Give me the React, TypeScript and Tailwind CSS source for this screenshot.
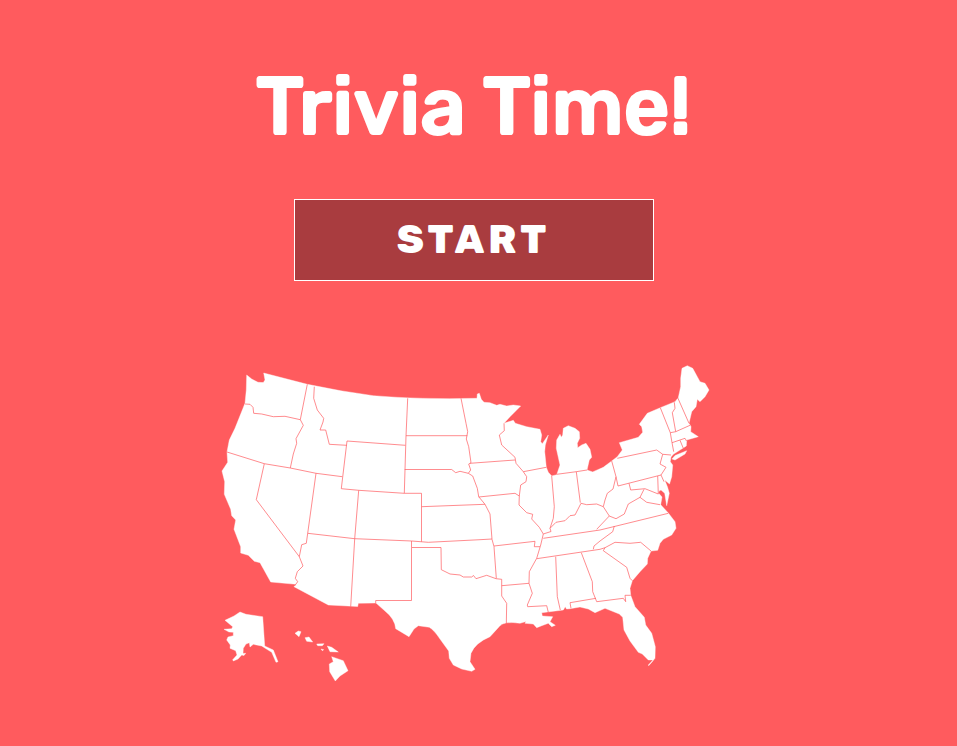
const MAINLAND =
  'M246.7 375L251.7 379L258 382.3L263.3 382.6L265 380L263.7 373L307.3 384.3Q340 391.3 373.3 395.7Q420 399.6 477 398.3L477.3 394L479.3 393.3L481.3 399.3L484 402.3L490 402.7L496.7 405.3L500 404.3L506.7 406L513.3 405L520.7 406L510 416.7L504 423.3L513.3 420.3L515.3 423.3L526.7 426.7L540 429.3L541.7 435L540.7 441.7L542.3 443.7L548.3 435L545.3 445L544.7 451.7L546.3 467.3L548.3 472.3L551.7 476L556.7 474.7L560 465L556.3 448.3L556.7 440L560 434.3L561.3 437.3L562.7 435L563.3 428.3L568.3 425.7L575 428.3L579.3 431.7L579.7 438.3L577.3 443.3L577.7 447.7L581.7 445L586 443.3L590 449.3L591.7 457.3L589.3 460L587 470L592.7 471.9L603.3 467.3L611.7 461L617.3 456.7L622.3 450L619.3 442.7L638.3 437.3L642.7 432.3L641.7 426.7L639.3 424.3L647.3 413.3L660.3 407.7L675 401.7L678.3 397.7L680.7 386.7L680.7 378.3L682 368.3L687.3 365.7L692.7 368.3L700 381.7L705 383.3L709 390L705 396.7L700 401.7L697.3 399.3L696 406.7L691.7 411.7L689 423.3L691 426.7L690.7 431.7L698.3 436.7L686.7 440L686.3 446L673.3 454.3L671 457L670.3 461.7L672.7 465L671.7 476.7L669.5 484L664.7 480L667.5 487L669.3 493.3L666.7 505.7L664.7 493.3L661 490L659 491L658.5 493L662 497L660.7 504.7L668.3 513L675 521.7L676 528.3L671.7 535L663.3 539.3L660 543.3L657.7 550.3L651 551L647.7 558.3L647.3 564L640 571.7L632.3 580.7L630 588.3L630.7 595.3L635 606.7L644.3 617.3L645.7 625L651.7 633.3L655.3 646.7L655 658.3L652 662L648.7 665.7L648.3 665L653 660L648.3 660L642.3 654L638.3 652.3L630 641L624 630L622.7 617.3L619.3 614L605 608.3L595 612.7L588.3 609L580 607L570 608.7L566.5 609L565.3 606.7L563.3 610L541.7 612.7L542.3 616L552.7 616.7L550 621.7L555.3 625.3L551.7 626.7L548.3 623.3L541.7 625.7L536.7 627.7L533.3 624L525 623.3L526 621.5L520 623.3Q505 621 500 625.7L490 636.7Q475 643 471 653.3L470 661.7L475 669.3L471.7 671.3L461.7 669L453.3 665L449.3 658.3L448.7 651L440 639Q434 630 429.3 627.3L418.3 625.7L414 629L409 636.7L395.7 628.7Q395 619 385 611L376 603L358.3 603.3L357.7 606.5L328.3 605L294 586.7L296 584.3L270.7 582L260 562.7L254.3 561.3L248.3 555.3L240.7 553L240.7 546.7L234 529.3L235.7 520L231.7 515.7L230.7 509.3L224.3 494.3L224.7 481.7L222 471L227.7 462.3L227 452L229.3 440L235 428.3L245 403.3L246.3 390Z';

const LONG_ISLAND = 'M672 459L675 455.5L686.7 450.7L685 454L675 460Z';

const BORDERS = [
  'M245 404L250 404.3L253 407.3L253.7 413.3L261.7 414L273.3 416.7L285 416.3L300.3 419.7',
  'M307.3 384.3L300.3 419.7L303.3 425.3L296 438.7L296.7 443.3L293.3 454L290.3 468',
  'M314.3 386.7L313.7 398.3L317.3 410L323.7 418.3L323 422L320 430L325.7 430L329.3 444.3L346.7 445.3',
  'M227 452L264.3 463.7L290.3 468L316 473.3L342.3 476.7',
  'M405.3 445.3L347 441L341.3 488.7L358.7 490.3L404.3 493.3H421.5V541.7',
  'M407.7 398.3L406 436L404.3 493.3',
  'M406 435.7H467.3',
  'M461 398.3L466 423.3L467.7 431.7L466.3 439L468.7 446.7L471 462.7L468.7 464L470.7 470L468.3 473.3',
  'M404.7 469.5H451.7L455.7 472.7L460 471.3L468.3 473.3L472.7 476L477.3 488.3L478.7 496.7L485 504.3L490 514L492 539.3L494 546.7L496.3 578.3',
  'M470 463.3L515 460',
  'M478.7 497L515 493.3L519.3 496',
  'M504 423.3L504.3 430.7L499.3 435L501.7 445L515 457.3L516 463.3L523.3 471.7L526.7 476.7L526 481.7L520.7 485L519.3 496L519 505L526.7 512.7L532.7 514.3L531.7 519L539.3 527.3L543.3 534L540.7 545L536.7 558.3L529.3 571.7L529 583.3L532.3 593.3L527.3 605L527.7 606.7L546.7 605.7L548.3 612.3',
  'M523.3 471.7L546.3 467.3',
  'M551.7 476L554.3 506.7L553.3 518.3L550 528.3L551 531.5L543.3 534',
  'M556.7 474.3L576.3 471.7L587 470',
  'M576.3 471.7L580.3 502.7',
  'M550 528.3L556 522.3L565 520.7L570 515.7L575 515L581 503.3L586.7 504.7L596.7 504L603.3 506.7L605 500L607.3 493.3L613 489L616 476.7L611.7 461',
  'M616 476.7L618 486L661 475',
  'M603.3 506.7L609.3 516L596.7 529.3',
  'M609.3 516L616 518.7L624.3 514L628.3 504L640 497.3L644 489.3',
  'M640 497.3L646.7 502.3L660 504.7',
  'M629 483.3L630.7 490L645 488.7L658.3 494L657.7 476',
  'M617.3 458.3L656.7 450L662.7 454.3L671 455',
  'M662.7 454.3L660 464L666 467.3L661 475L664 481.7',
  'M660.3 407.7L670.3 432.7L672 442.7L673.7 451.7',
  'M674.3 402.3L675 408.3L672.3 412.7L675.7 431.7',
  'M677.7 397.7L689 423.3',
  'M670.3 432.7L675.7 431.7L690 425.3',
  'M672 442.7L685 438.3L686.5 441',
  'M680 440.3L683.3 448.3',
  'M543.3 538.3L600 530L668.3 513.3',
  'M536.7 558.7L600 549.3L605 547.7L615 542.3L630 543.3L640.7 542.3L651 551',
  'M614.3 526L612.7 531.7L600 541L594 546L593.3 549.3',
  'M605 547.7L603.3 550.7L626.7 567.3L630 578.3L632.3 580.7',
  'M581.3 552.7L592.3 581.7L592.7 591.7L596.7 601.7L623.3 598.3L625.7 601.7L625 595.3L630.7 595.3',
  'M596 598.3L570 602.7L571 608.3',
  'M555.7 556.7L557.3 596.7L560.3 610',
  'M494 546L535 541.3L534.3 546.7H540',
  'M501.7 585.7L529 583.3',
  'M501.7 579.3V596L506.7 603.3L506.3 624.3',
  'M421.7 506.7L485 504.3',
  'M307.7 533.3L354.7 538.7L411.7 541L428.3 542.3L480 539.7L492 539',
  'M358.7 490.3L354.7 538.7L350.7 606.7',
  'M411.5 541V600.5H375.7V603',
  'M412 547.5H441L441.3 569.7L450 574L460 575L463.3 577L471.7 577L473.5 575.5L476 578.7L486.7 575.3L496 578.7L501.7 579.3',
  'M316 473.3L307.7 533.3L306.3 543.3L301.7 544.7L299.3 556.7L303 566L297.3 571.7L295.3 578.3L297.7 581.7L294.5 586',
  'M264.3 463.7L256.3 499.7L299.3 556.7',
].join('');

const ALASKA =
  'M240 612L246 614.3L262.7 616.7L264.7 646L273.3 650L278 661.7L276 662.3L271.7 652.3L261.7 646L253.3 644.3L250 647L249.3 642.7L246 644L243.3 648.3L243 653.5L245.7 653.3L244 655.5L241.7 655L238 659L233.3 661L232.7 659.7L237 655L235.7 650.7L230 648.3L230.3 645L226.7 640L228 637L233.3 635.7L233.3 632.3L229 632L224 629.3L231.7 628.7L232.7 626.7L225 620.3L234 616Z';

const HAWAII =
  'M295 633.3L298.3 631L301 631.7L299 636.7ZM305 637.7L309 637L312.7 642L306.7 641.3ZM316.7 644L324 643.7L322.3 645.7L317.7 645.7ZM321 649L323.7 649.7L322.3 650.7ZM327.3 646L331.7 647.3L338.3 652L330 651.7ZM331.7 656.7L343.3 660.7L348 670.7L340 676L335.3 681L329.7 671.7L329.3 664L333.3 661.7Z';

function UnitedStatesMap() {
  return (
    <svg
      viewBox="221 365 489 317"
      className="mr-4 mt-21 h-auto w-[489px] max-w-full"
      role="img"
      aria-label="Map of the United States"
    >
      <g fill="#fff" stroke="#fff" strokeWidth="0.4" strokeLinejoin="round">
        <path d={MAINLAND} />
        <path d={LONG_ISLAND} />
        <path d={ALASKA} />
        <path d={HAWAII} />
      </g>
      <path d={BORDERS} fill="none" stroke="#ff5a5f" strokeWidth="0.7" strokeLinejoin="round" />
    </svg>
  );
}

export default function App() {
  return (
    <main className="flex min-h-screen flex-col items-center bg-[#ff5b5e] pr-2.5 pt-[59px] font-['Rubik','Inter',sans-serif] text-white">
      <h1 className="text-center text-[80px] leading-24 font-medium [-webkit-text-stroke:2px_white]">
        Trivia Time!
      </h1>
      <button
        type="button"
        className="mt-11 h-[82px] w-[360px] max-w-full cursor-pointer border border-white bg-[#a93c3f] text-[40px] leading-none font-extrabold tracking-widest"
      >
        START
      </button>
      <UnitedStatesMap />
    </main>
  );
}
